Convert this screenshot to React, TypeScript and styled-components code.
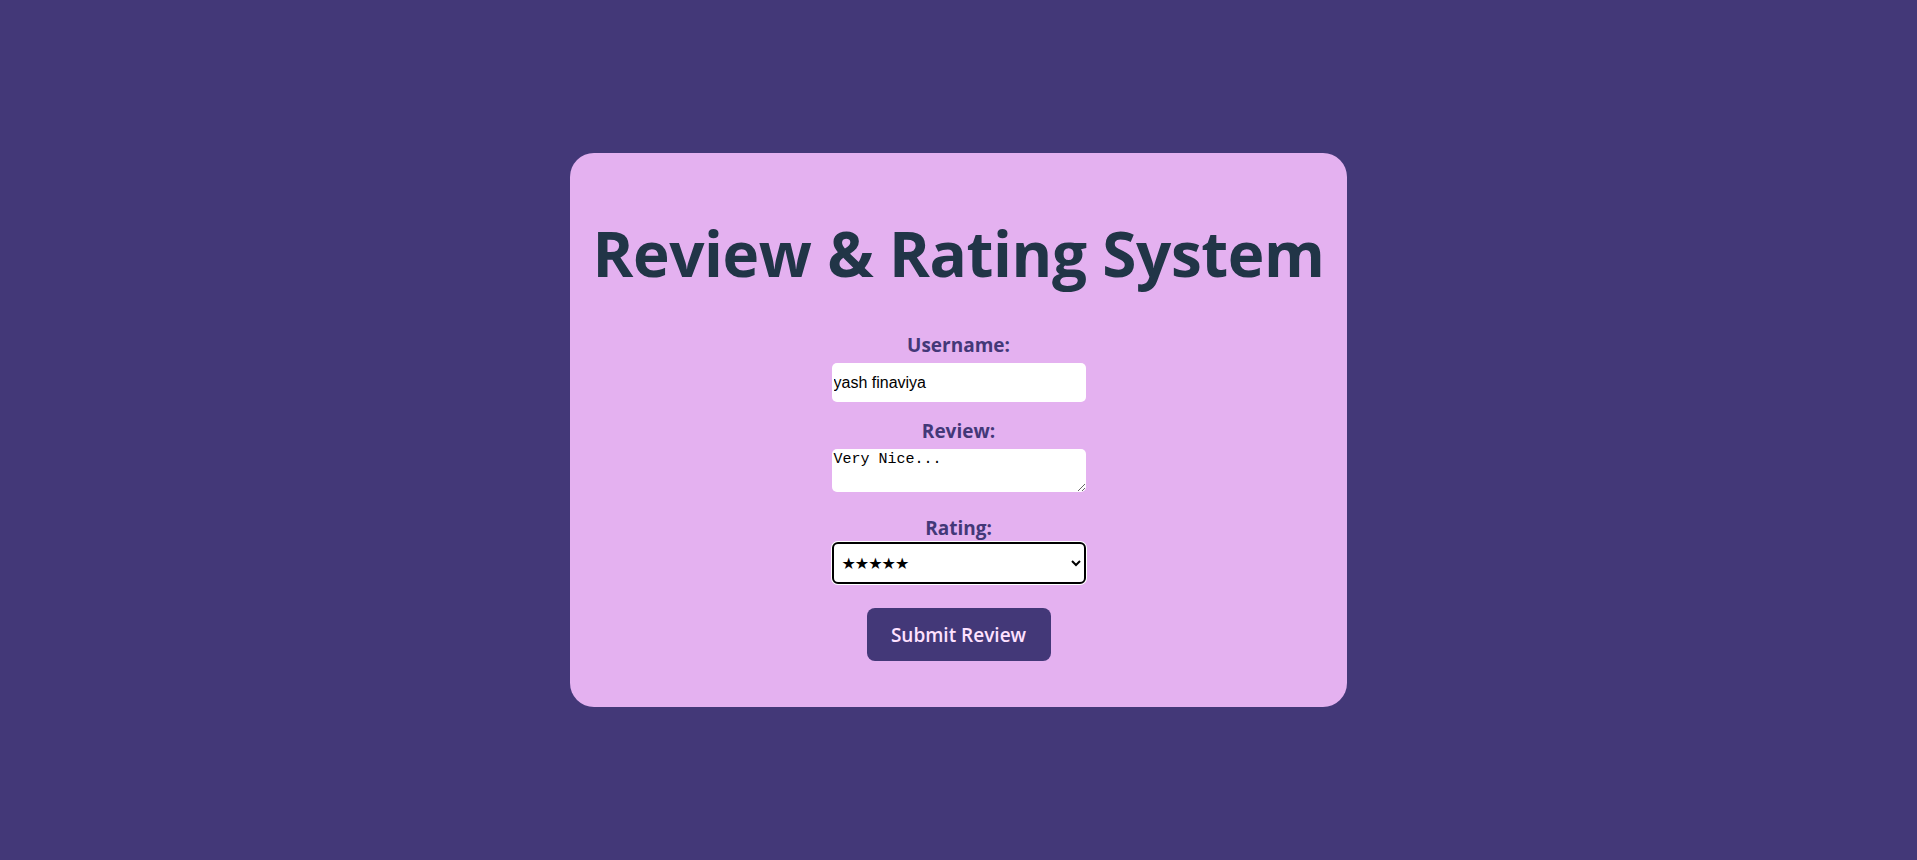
import React, { useState } from "react";
import styled, { createGlobalStyle } from "styled-components";

const GlobalStyle = createGlobalStyle`
  html, body {
    margin: 0;
    padding: 0;
    background: #433878;
  }
  body {
    font-family: "Open Sans", "Noto Sans", sans-serif;
  }
`;

const Page = styled.div`
  height: 100vh;
  display: flex;
  align-items: center;
  justify-content: center;
`;

const Card = styled.div`
  background: #e4b1f0;
  border-radius: 24px;
  padding: 23px 22px 46px;
  display: flex;
  flex-direction: column;
  align-items: center;
`;

const Title = styled.h1`
  margin: 43px 0 46px;
  font-size: 62px;
  line-height: 1.1;
  font-weight: 700;
  letter-spacing: -0.4px;
  color: #213547;
  white-space: nowrap;
`;

const Form = styled.form`
  display: flex;
  flex-direction: column;
  align-items: center;
`;

const Label = styled.label<{ $gap?: number }>`
  display: block;
  font-size: 19px;
  line-height: 24px;
  font-weight: 700;
  color: #433878;
  margin-bottom: ${(p) => p.$gap ?? 6}px;
`;

const TextInput = styled.input`
  box-sizing: border-box;
  width: 254px;
  height: 39px;
  margin: 0 0 17px;
  padding: 0 2px;
  border: none;
  border-radius: 5px;
  background: #fff;
  font-family: "Liberation Sans", Arial, sans-serif;
  font-size: 16px;
  color: #000;
  outline: none;
`;

const TextArea = styled.textarea`
  box-sizing: border-box;
  width: 254px;
  height: 43px;
  margin: 0 0 24px;
  padding: 2px;
  border: none;
  border-radius: 5px;
  background: #fff;
  font-family: "Liberation Mono", "DejaVu Sans Mono", monospace;
  font-size: 15px;
  line-height: 17px;
  color: #000;
  outline: none;
`;

const Select = styled.select`
  box-sizing: border-box;
  width: 254px;
  height: 42px;
  margin: 0 0 24px;
  padding: 0 4px;
  border: 2px solid #000;
  border-radius: 6px;
  box-shadow: 0 0 0 1px #fff;
  background: #fff;
  font-family: "DejaVu Sans", sans-serif;
  font-size: 16px;
  letter-spacing: -1px;
  color: #000;
  outline: none;
`;

const SubmitButton = styled.button`
  width: 184px;
  height: 53px;
  border: none;
  border-radius: 8px;
  background: #433878;
  color: #ffe1ff;
  font-family: "Open Sans", "Noto Sans", sans-serif;
  font-size: 19px;
  font-weight: 600;
  cursor: pointer;
`;

const ratings = [5, 4, 3, 2, 1];

export default function App() {
  const [username, setUsername] = useState("yash finaviya");
  const [review, setReview] = useState("Very Nice...");
  const [rating, setRating] = useState(5);

  return (
    <>
      <GlobalStyle />
      <Page>
        <Card>
          <Title>Review &amp; Rating System</Title>
          <Form onSubmit={(e) => e.preventDefault()}>
            <Label htmlFor="username">Username:</Label>
            <TextInput
              id="username"
              value={username}
              onChange={(e) => setUsername(e.target.value)}
            />
            <Label htmlFor="review">Review:</Label>
            <TextArea
              id="review"
              value={review}
              onChange={(e) => setReview(e.target.value)}
            />
            <Label htmlFor="rating" $gap={2}>Rating:</Label>
            <Select
              id="rating"
              value={rating}
              onChange={(e) => setRating(Number(e.target.value))}
            >
              {ratings.map((r) => (
                <option key={r} value={r}>
                  {"★".repeat(r)}
                </option>
              ))}
            </Select>
            <SubmitButton type="submit">Submit Review</SubmitButton>
          </Form>
        </Card>
      </Page>
    </>
  );
}
